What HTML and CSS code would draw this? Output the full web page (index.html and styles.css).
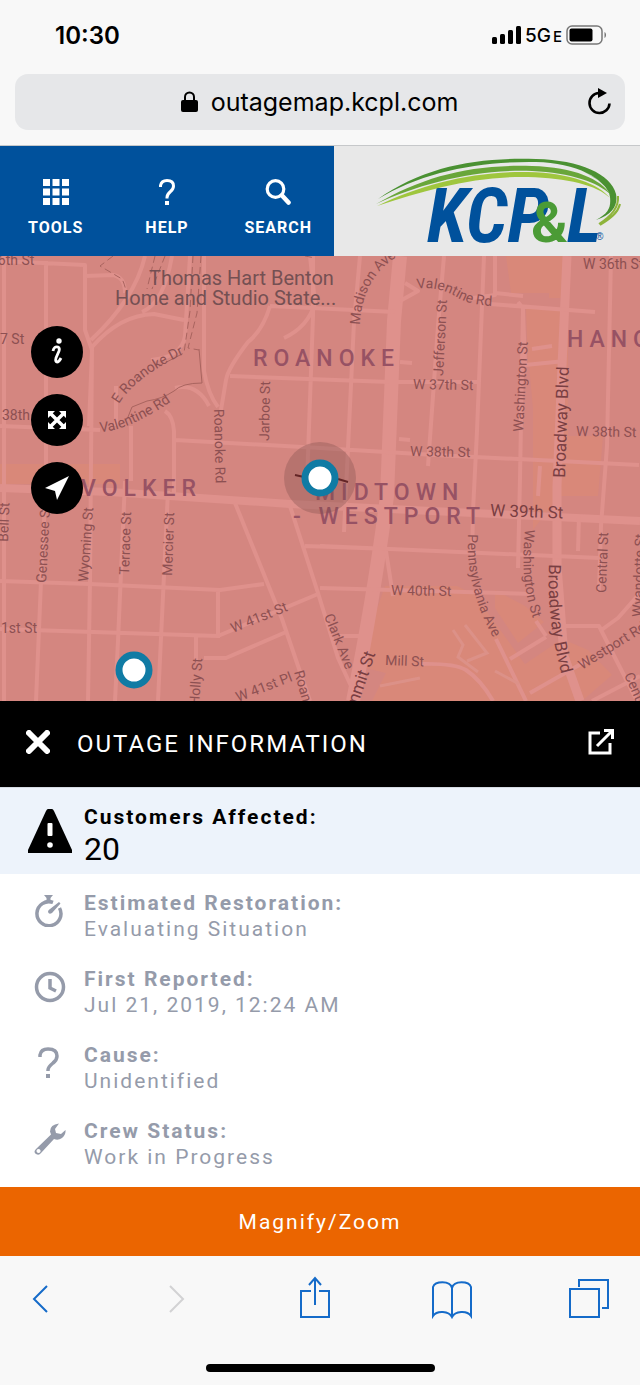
FILE: index.html
```html
<!DOCTYPE html>
<html lang="en">
<head>
<meta charset="utf-8">
<meta name="viewport" content="width=device-width, initial-scale=1">
<title>KCP&amp;L Outage Map</title>
<link rel="stylesheet" href="styles.css">
</head>
<body>
<div class="screen">
  <div class="browser-top">
    <div class="status">
      <span class="clock">10:30</span>
      <div class="status-right">
        <svg width="29" height="20" viewBox="0 0 29 20" aria-hidden="true"><rect y="12" width="5" height="7" rx="1.5"/><rect x="8" y="9" width="5" height="10" rx="1.5"/><rect x="16" y="5" width="5" height="14" rx="1.5"/><rect x="24" y="1" width="5" height="18" rx="1.5"/></svg>
        <span class="network">5G<small>E</small></span>
        <svg width="41" height="20" viewBox="0 0 41 20" aria-hidden="true"><rect x="1" y="1" width="35" height="18" rx="5" fill="none" stroke="#777" stroke-width="1.5"/><rect x="3.500" y="3.500" width="23" height="13" rx="2"/><path d="M38.500 7v6c2-1 2-5 0-6z" fill="#777"/></svg>
      </div>
    </div>
    <div class="address-bar">
      <button class="address" type="button">
        <svg width="17" height="22" viewBox="0 0 17 22" aria-hidden="true"><rect y="9" width="17" height="12" rx="2"/><path d="M4 10V6a4.500 4.500 0 0 1 9 0v4" fill="none" stroke="#000" stroke-width="2"/></svg>
        <span>outagemap.kcpl.com</span>
      </button>
      <button class="reload" type="button" aria-label="Reload">
        <svg width="26" height="28" viewBox="0 0 26 28" aria-hidden="true"><path d="M13 5a10 10 0 1 0 10.500 10.500" fill="none" stroke="#000" stroke-width="2.600"/><path d="M12 0v10l9-5z"/></svg>
      </button>
    </div>
  </div>

  <header class="site-header">
    <nav class="nav">
      <button type="button"><svg width="26" height="26" viewBox="0 0 26 26" aria-hidden="true"><path d="M0 0h7v7H0zM9.500 0h7v7h-7zM19 0h7v7h-7zM0 9.500h7v7H0zM9.500 9.500h7v7h-7zM19 9.500h7v7h-7zM0 19h7v7H0zM9.500 19h7v7h-7zM19 19h7v7h-7z"/></svg><span>TOOLS</span></button>
      <button type="button"><svg width="26" height="26" viewBox="0 0 26 26" aria-hidden="true"><path d="M6.500 8V6.500q1-5 6.500-5 6.500 0 6.500 5.500 0 3-3 5.500-3.500 3-3.500 6v1" fill="none" stroke="#fff" stroke-width="3"/><rect x="11" y="22" width="4" height="4"/></svg><span>HELP</span></button>
      <button type="button"><svg width="26" height="26" viewBox="0 0 26 26" aria-hidden="true"><circle cx="10.500" cy="10" r="8.300" fill="none" stroke="#fff" stroke-width="3.200"/><path d="M17 16.500l6.500 7" stroke="#fff" stroke-width="4.600" stroke-linecap="round"/></svg><span>SEARCH</span></button>
    </nav>
    <a class="brand" href="#" aria-label="KCP&amp;L home">
      <svg width="306" height="110" viewBox="0 0 306 110">
        <g class="logo-letters"><text x="93" y="96">KCP</text><text x="233" y="96">L</text></g>
        <text class="logo-amp" x="197" y="96">&amp;</text>
        <text class="logo-reg" x="262" y="94">®</text>
        <path d="M44 53C88 26 145 15 202 16c40 1 70 16 75 36-1-10-12-19-27-26 14 7 25 15 26 25 1 10-1 16-14 23 18-6 22-16 20-26-5-20-36-34-80-35C145 11 90 20 44 53z" fill="#4a9132"/>
        <path d="M42 58C90 30 138 18 198 20c42 1 69 13 79 29-13-13-40-22-79-24-58-2-112 13-156 33z" fill="#69a63a"/>
        <path d="M43 60c45-22 97-35 151-34 43 1 71 12 82 26-13-13-43-20-82-21-54-1-102 13-151 29z" fill="#9fc63e"/>
        <path d="M284 50c1 12-7 20-19 28m21-20c-2 9-10 15-20 21" fill="none" stroke="#8eb43b" stroke-width="2"/>
      </svg>
    </a>
  </header>

  <main>
    <section class="map" aria-label="Outage map">
      <svg class="map-canvas" viewBox="0 0 640 445" preserveAspectRatio="xMidYMid slice">
        <defs>
          <path id="eRoanoke" d="M119 148Q136 119 195 93"/>
          <path id="valWest" d="M100 176Q129 175 178 141"/>
          <path id="madison" d="M360 69Q362 22 398 0"/>
          <path id="valEast" d="M417 33Q438 29 460 43Q474 50 498 50"/>
          <path id="roanokeRd" d="M214 153L216 239"/>
          <path id="pennsylvania" d="M468 278Q465 335 497 388"/>
          <path id="washington" d="M525 273Q519 330 536 370"/>
          <path id="broadway" d="M549 308Q546 365 564 428"/>
        </defs>
        <rect width="640" height="445" fill="#d48680"/>
        <g fill="#d98879">
          <path d="M506 0h58v42h-15V37h-38zM526 52h42v59h-40zM529 108h39v120l-35 46V153zM543 180h60l-5 60h-60zM385 330h72l18 9 62 86-7 20H372l14-28-29-7zM495 334l30 16 19 16-26 21-23-35zM512 417l50-34 26 11 24 25-30 26h-59zM0 208h120v20H0z"/>
        </g>
        <g fill="none" stroke="#df918c" stroke-linejoin="round">
          <path stroke-width="14" d="M400 0l-6 65-5 125-2 50q-12 95-34 205"/>
          <path stroke-width="9" d="M567 0l-5 110-5 120v80l7 90 16 45"/>
          <path stroke-width="8" d="M0 232l110 4 180 12 100 5 250 12"/>
          <path stroke-width="4" d="M0 5l85 4v65l7 20-3 76M0 170l100 4M4 0v445M46 5v220l-5 100-5 120M92 90l-2 235-2 120M85 20l28-1q12 2 12 18M145 0q-10 43-54 84M92 91q28-32 62-33l30 6M172 0q-8 47-30 56M190 0l-5 80q-3 21-34 24M204 0v115q4 23 14 36M310 0l5 47q-7 24-31 35M270 50q-7 24-22 36-20 26-22 38l-5 30M230 120l160 6h90M270 50l125 6M175 184l145 8 115 7 204 10M116 130v40M131 170v55M165 155q8 5 9 20v65M175 132q22-5 34 18M490 48l105 8M313 0v60l-6 167M360 0l-6 66-10 210M444 0l-6 70-10 140M484 0l-7 175-4 80-1 50M495 0v39l-22 3M495 37l28 3M518 46l5 6-3 170-2 90M611 0l-4 190-6 80-2 66M523 54l2 55 40-4M532 93l20-3M405 27l13 8-18 10M400 106l12 1M399 183l11 1"/>
          <path stroke-width="4" d="M0 325l90 3 130 6 44-6M0 373l218 7 100-42M196 380v26M204 402h22l60-26M235 247q33 81 47 116l28 82M290 250l28 87 20 65 20 43M218 334v48M168 235l-10 210M125 225l-7 160-3 60M320 290l70 3 210 9M320 332l213 6M305 290l85 3M386 295l7 45M540 210l-2 30M579 260l-1 35M496 383l30 62M510 403l36-22M420 408q34-1 46 6 15 10 27 31M546 380l-10-15M562 370h37l38 75M530 437l58-33M592 445l48-25M600 375l18-13 22-25M340 380h25"/>
        </g>
        <g fill="none" stroke="#dc9188" stroke-width="3"><path d="M453 374l10 15-5 12 20 15M465 369l22 28-20 8M380 430l40-8M495 415l24 13"/></g>
        <g fill="none" stroke="#a9645f" stroke-width="1">
          <path stroke-dasharray="7 4" d="M113 0l-13 10 22 13q5 10 4 20M155 0l-8 33M165 0l-13 33M193 0l-3 55-6 42-25 13M201 0l-4 57-9 35 11 2M305 0l10 2"/>
          <path d="M199 93l3 34q-20 0-28 8-12 8-27 10l-15 6-4 10"/>
        </g>
        <g class="road">
          <text x="-10" y="9">36th St</text><text x="0" y="88">7 St</text><text x="2" y="164">38th St</text><text x="1" y="377">1st St</text>
          <text x="413" y="133" transform="rotate(1 413 133)">W 37th St</text><text x="410" y="200" transform="rotate(1 410 200)">W 38th St</text>
          <text x="583" y="13">W 36th St</text><text x="576" y="180" transform="rotate(1 576 180)">W 38th St</text>
          <text x="391" y="339" transform="rotate(1 391 339)">W 40th St</text><text x="385" y="409" transform="rotate(2 385 409)">Mill St</text>
          <text transform="translate(269 185) rotate(-89)">Jarboe St</text><text transform="translate(443 120) rotate(-87)">Jefferson St</text>
          <text transform="translate(523 176) rotate(-87)">Washington St</text><text transform="translate(8 286) rotate(-88)">Bell St</text>
          <text transform="translate(46 327) rotate(-87)">Genessee St</text><text transform="translate(88 326) rotate(-86)">Wyoming St</text>
          <text transform="translate(129 319) rotate(-88)">Terrace St</text><text transform="translate(172 320) rotate(-88)">Mercier St</text>
          <text transform="translate(606 337) rotate(-88)">Central St</text><text transform="translate(642 361) rotate(-88)">Wyandotte St</text>
          <text transform="translate(199 450) rotate(-86)">Holly St</text><text transform="translate(233 377) rotate(-22)">W 41st St</text>
          <text transform="translate(238 446) rotate(-21)">W 41st Pl</text><text transform="translate(294 416) rotate(74)">Roanoke Rd</text>
          <text transform="translate(324 360) rotate(68)">Clark Ave</text><text transform="translate(624 419) rotate(66)">Central St</text>
          <text transform="translate(582 414) rotate(-32)">Westport Rd</text>
          <text><textPath href="#eRoanoke">E Roanoke Dr</textPath></text><text><textPath href="#valWest">Valentine Rd</textPath></text>
          <text><textPath href="#madison">Madison Ave</textPath></text><text><textPath href="#valEast">Valentine Rd</textPath></text>
          <text><textPath href="#roanokeRd">Roanoke Rd</textPath></text><text><textPath href="#pennsylvania">Pennsylvania Ave</textPath></text>
          <text><textPath href="#washington">Washington St</textPath></text>
        </g>
        <g class="road road-major">
          <text x="490" y="260" transform="rotate(2 490 260)">W 39th St</text><text transform="translate(565 222) rotate(-88)">Broadway Blvd</text>
          <text><textPath href="#broadway">Broadway Blvd</textPath></text><text transform="translate(350 472) rotate(-71)">Summit St</text>
        </g>
        <g class="place"><text x="149" y="29">Thomas Hart Benton</text><text x="115" y="49">Home and Studio State...</text></g>
        <g class="district"><text x="253" y="110">ROANOKE</text><text x="567" y="91">HANOVER</text><text x="81" y="240">VOLKER</text><text x="315" y="244">MIDTOWN</text><text x="293" y="268">- WESTPORT</text></g>
        <circle cx="320" cy="222" r="36" fill="#814f4c" fill-opacity=".35"/>
        <path d="M295 219l9 2M338 223l10 3" stroke="#632526" stroke-width="2"/>
        <g fill="#fff" stroke="#107ba4" stroke-width="7"><circle cx="320" cy="222" r="15"/><circle cx="134" cy="414" r="15"/></g>
      </svg>
      <div class="map-tools">
        <button type="button" aria-label="Map information"><svg width="24" height="28" viewBox="0 0 24 28"><circle cx="14" cy="3" r="2.700"/><path d="M8 13q1-5 5-4 2 1 1 4l-3 7q-1 4 1 4 2 0 4-4" fill="none" stroke="#fff" stroke-width="2.800"/></svg></button>
        <button type="button" aria-label="Full extent"><svg width="20" height="20" viewBox="0 0 20 20"><path d="M3 3l14 14M17 3L3 17" stroke="#fff" stroke-width="3.500"/><path d="M1 1h7L1 8zM19 1v7l-7-7zM1 19v-7l7 7zM19 19h-7l7-7z"/></svg></button>
        <button type="button" aria-label="My location"><svg width="26" height="26" viewBox="0 0 26 26"><path d="M25 1L1 13l10 3 2 9z"/></svg></button>
      </div>
    </section>

    <section class="panel">
      <div class="panel-head">
        <button type="button" aria-label="Close"><svg width="24" height="24" viewBox="0 0 24 24"><path d="M3 3l18 18M21 3L3 21" stroke="#fff" stroke-width="6" stroke-linecap="round"/></svg></button>
        <h1>OUTAGE INFORMATION</h1>
        <button type="button" aria-label="Open in new window"><svg width="26" height="26" viewBox="0 0 26 26" fill="none" stroke="#fff" stroke-width="3"><path d="M12 4H2v20h20V14M9 17L23 3M16 1.500h8.500V10"/></svg></button>
      </div>
      <dl class="details">
        <div class="detail detail-main">
          <svg width="44" height="44" viewBox="0 0 44 44" aria-hidden="true"><path d="M20 0h4q1 0 2 2l18 39v3H0v-3L18 2q1-2 2-2z"/><rect x="19.500" y="14" width="5" height="13" rx="1" fill="#fff"/><circle cx="22" cy="36" r="2.800" fill="#fff"/></svg>
          <div><dt>Customers Affected:</dt><dd>20</dd></div>
        </div>
        <div class="detail">
          <svg width="32" height="32" viewBox="0 0 32 32" aria-hidden="true"><path d="M19 7.400A12 12 0 1 0 25.500 13" fill="none" stroke="#959baa" stroke-width="3.500"/><path d="M10 0h9l-2.500 3v3h-4V3zM25 7l1.500 1.500L18 18q-3 2-4-1 0-2 2-3z"/></svg>
          <div><dt>Estimated Restoration:</dt><dd>Evaluating Situation</dd></div>
        </div>
        <div class="detail">
          <svg width="32" height="32" viewBox="0 0 32 32" aria-hidden="true"><circle cx="16" cy="16" r="13.500" fill="none" stroke="#959baa" stroke-width="3.500"/><path d="M16 8v9l6 3" fill="none" stroke="#959baa" stroke-width="3.500"/></svg>
          <div><dt>First Reported:</dt><dd>Jul 21, 2019, 12:24 AM</dd></div>
        </div>
        <div class="detail">
          <svg width="32" height="32" viewBox="0 0 32 32" aria-hidden="true"><path d="M6 10V8q1-6 8-6 9 0 9 7 0 4-4 7-5 4-5 7v1" fill="none" stroke="#959baa" stroke-width="3.500"/><rect x="12" y="27" width="4" height="4"/></svg>
          <div><dt>Cause:</dt><dd>Unidentified</dd></div>
        </div>
        <div class="detail">
          <svg width="32" height="32" viewBox="0 0 32 32" aria-hidden="true"><path fill-rule="evenodd" d="M25 .5q-9 1-9 8l1 3L2 26q-3 3 0 5 3 2 5-1l13-14q4 2 8-1t3.500-8L27 11l-5-1-1-4zM4.500 26a2 2 0 1 0 .1 0z"/></svg>
          <div><dt>Crew Status:</dt><dd>Work in Progress</dd></div>
        </div>
      </dl>
      <button class="magnify" type="button">Magnify/Zoom</button>
    </section>
  </main>

  <footer class="browser-bottom">
    <div class="toolbar">
      <button type="button" aria-label="Back"><svg width="16" height="44" viewBox="0 0 16 44"><path d="M15 10L2 23l13 13"/></svg></button>
      <button type="button" aria-label="Forward" disabled><svg width="16" height="44" viewBox="0 0 16 44"><path d="M1 10l13 13L1 36"/></svg></button>
      <button type="button" aria-label="Share"><svg width="32" height="44" viewBox="0 0 32 44"><path d="M12 15H2v26h28V15H20M16 29V2M10 9l6-7 6 7"/></svg></button>
      <button type="button" aria-label="Bookmarks"><svg width="40" height="44" viewBox="0 0 40 44"><path d="M20 41V12C18 4 3 5 1 11v29c4-6 16-5 19 1 3-6 15-7 19-1V11C37 5 22 4 20 12"/></svg></button>
      <button type="button" aria-label="Tabs"><svg width="40" height="44" viewBox="0 0 40 44"><path d="M1 13h29v28H1zM10 11V4h29v28h-6"/></svg></button>
    </div>
    <div class="home-indicator"></div>
  </footer>
</div>
</body>
</html>
```
FILE: styles.css
```css
* { box-sizing: border-box; }
body { margin: 0; background: #f8f8f8; color: #000; font-family: Roboto, "Liberation Sans", sans-serif; }
button { padding: 0; border: 0; background: none; color: inherit; font: inherit; cursor: pointer; }
svg { display: block; flex: none; }
.screen { display: flex; flex-direction: column; min-height: 100vh; }

.browser-top { padding: 0 15px 15px; border-bottom: 1px solid #c6c8ca; font-family: Inter, "Liberation Sans", sans-serif; }
.status { display: flex; justify-content: space-between; align-items: center; height: 74px; padding: 0 18px 4px 40px; }
.clock { font-size: 24px; font-weight: 600; }
.status-right { display: flex; align-items: center; gap: 4px; }
.network { font-size: 19px; font-weight: 500; }
.network small { margin-left: 2px; font-size: 15px; }
.address-bar { display: flex; align-items: center; height: 56px; padding: 0 13px 0 38px; border-radius: 13px; background: #e6e7e9; }
.address { display: flex; flex: 1; justify-content: center; align-items: center; gap: 13px; font-size: 25px; }

.site-header { display: flex; height: 110px; background: #e8e8e8; }
.nav { display: grid; flex: 0 0 334px; grid-template-columns: repeat(3, 1fr); padding-top: 14px; background: #00519c; color: #fff; fill: #fff; }
.nav button { display: flex; flex-direction: column; align-items: center; justify-content: center; gap: 13px; font-size: 16px; line-height: 20px; font-weight: 700; letter-spacing: 1px; }
.brand { display: flex; flex: 1; justify-content: flex-end; }
.logo-letters { fill: #00519c; font: italic 700 75px "Roboto Condensed", Roboto, sans-serif; }
.logo-amp { fill: #4b9b36; font: 700 56px Roboto, sans-serif; }
.logo-reg { fill: #00519c; font: 10px "Liberation Sans", sans-serif; }

.map { position: relative; }
.map-canvas { width: 100%; height: 445px; }
.road { fill: #8d5052; font-size: 14px; }
.road-major { fill: #793e42; font-size: 17px; }
.place { fill: #755053; font-size: 20px; }
.district { fill: #975264; font-size: 23px; font-weight: 500; letter-spacing: 6px; }
.map-tools { position: absolute; top: 70px; left: 31px; display: grid; gap: 16px; }
.map-tools button { display: grid; place-items: center; width: 52px; height: 52px; border-radius: 50%; background: #000; fill: #fff; }

.panel { background: #fff; }
.panel-head { display: flex; align-items: center; height: 87px; padding: 0 26px; border-bottom: 1px solid #d5dbe3; background: #000; color: #fff; }
.panel-head button { padding-bottom: 5px; }
.panel-head h1 { flex: 1; margin: 0 27px; font-size: 24px; font-weight: 400; letter-spacing: 2px; }
.details { margin: 0; }
.detail { display: flex; gap: 18px; height: 76px; padding: 16px 27px 0 34px; color: #959baa; fill: #959baa; }
.detail > svg { margin-top: 5px; }
dt { font-size: 21px; line-height: 26px; font-weight: 700; letter-spacing: 2px; }
dd { margin: 0; font-size: 21px; line-height: 26px; letter-spacing: 2px; }
.detail-main { gap: 12px; height: 86px; padding-left: 28px; background: #edf3fb; color: #000; fill: #000; }
.detail-main dd { font-size: 32px; line-height: 38px; letter-spacing: 0; }
.magnify { display: block; width: 100%; height: 69px; margin-top: 9px; background: #eb6500; color: #fff; font-size: 21px; letter-spacing: 2px; }

.browser-bottom { flex: 1; }
.toolbar { display: flex; justify-content: space-between; padding: 20px 31px 0 20px; }
.toolbar button { display: grid; justify-items: center; width: 40px; }
.toolbar svg { fill: none; stroke: #156bc9; stroke-width: 2; }
.toolbar button:disabled svg { stroke: #d2d2d4; }
.home-indicator { width: 229px; height: 8px; margin: 44px auto 0; border-radius: 4px; background: #000; }
```
